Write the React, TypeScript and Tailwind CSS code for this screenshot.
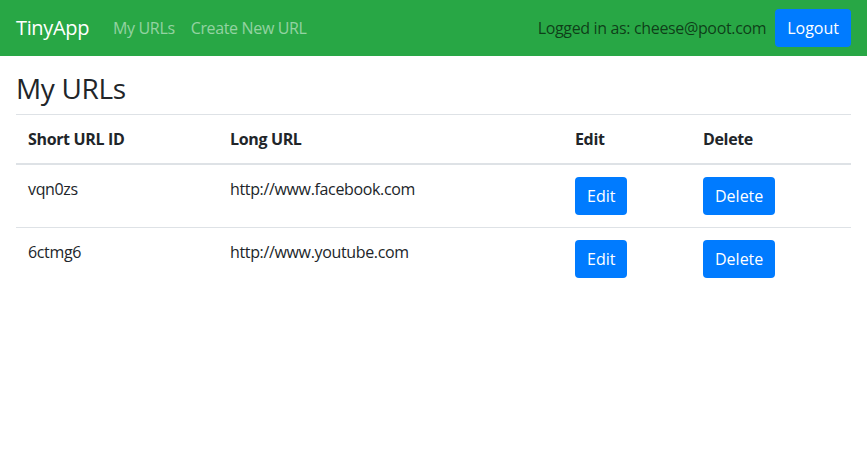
const urls = [
  { id: "vqn0zs", longURL: "http://www.facebook.com" },
  { id: "6ctmg6", longURL: "http://www.youtube.com" },
];

export default function App() {
  return (
    <div className="min-h-screen bg-white text-[#212529] font-['Open_Sans',sans-serif] text-base leading-6 tracking-[-0.35px]">
      {/* Navbar */}
      <nav className="flex items-center justify-between h-14 px-4 bg-[#28a745]">
        <div className="flex items-center">
          <a href="#" className="text-xl leading-[30px] text-white mr-4">
            TinyApp
          </a>
          <a href="#" className="px-2 text-white/50">
            My URLs
          </a>
          <a href="#" className="px-2 text-white/50">
            Create New URL
          </a>
        </div>
        <div className="flex items-center gap-[9px]">
          <span className="text-black/65">Logged in as: cheese@poot.com</span>
          <button className="h-[38px] px-3 rounded-[4px] bg-[#007bff] text-white tracking-normal">
            Logout
          </button>
        </div>
      </nav>

      {/* Content */}
      <main className="px-4 pt-4">
        <h3 className="text-[28px] leading-[33.6px] font-medium mb-2">My URLs</h3>
        <table className="w-full border-collapse text-left">
          <thead>
            <tr className="border-t border-[#dee2e6]">
              <th className="w-[202px] p-3 font-bold border-b-2 border-[#dee2e6]">Short URL ID</th>
              <th className="w-[345px] p-3 font-bold border-b-2 border-[#dee2e6]">Long URL</th>
              <th className="w-[128px] p-3 font-bold border-b-2 border-[#dee2e6]">Edit</th>
              <th className="w-[160px] p-3 font-bold border-b-2 border-[#dee2e6]">Delete</th>
            </tr>
          </thead>
          <tbody>
            {urls.map((url, i) => (
              <tr key={url.id} className={i > 0 ? "border-t border-[#dee2e6]" : ""}>
                <td className="p-3 align-top">{url.id}</td>
                <td className="p-3 align-top">{url.longURL}</td>
                <td className="p-3 align-top">
                  <button className="h-[38px] px-3 rounded-[4px] bg-[#007bff] text-white tracking-normal">Edit</button>
                </td>
                <td className="p-3 align-top">
                  <button className="h-[38px] px-3 rounded-[4px] bg-[#007bff] text-white tracking-normal">Delete</button>
                </td>
              </tr>
            ))}
          </tbody>
        </table>
      </main>
    </div>
  );
}
